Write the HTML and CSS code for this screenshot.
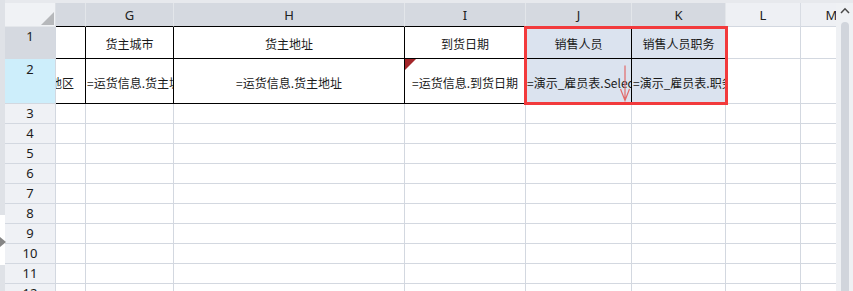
FILE: index.html
```html
<!DOCTYPE html>
<html lang="zh-CN">
<head>
<meta charset="utf-8">
<title>Sheet</title>
<link rel="stylesheet" href="styles.css">
</head>
<body>
<div class="app">
  <div class="lstrip">
    <div class="ls-top"></div>
    <div class="ls-gap"><span class="ls-arrow"></span></div>
    <div class="ls-bot"></div>
  </div>
  <div class="main">
    <div class="body">
      <div class="sheet">
        <div class="grid">
          <div class="corner"><span class="corner-tri"></span></div>
          <div class="ch tb"></div>
          <div class="ch tb">G</div>
          <div class="ch tb">H</div>
          <div class="ch tb">I</div>
          <div class="ch tb">J</div>
          <div class="ch tb">K</div>
          <div class="ch lt">L</div>
          <div class="ch lt">M</div>

          <div class="rh r1">1</div>
          <div class="c t"></div>
          <div class="c t">货主城市</div>
          <div class="c t">货主地址</div>
          <div class="c t">到货日期</div>
          <div class="c t hl">销售人员</div>
          <div class="c t hl">销售人员职务</div>
          <div class="c"></div>
          <div class="c"></div>

          <div class="rh r2">2</div>
          <div class="c t end">=运货信息.货主地区</div>
          <div class="c t start">=运货信息.货主城市</div>
          <div class="c t">=运货信息.货主地址</div>
          <div class="c t note"><span class="note-tri"></span>=运货信息.到货日期</div>
          <div class="c t hl start">=演示_雇员表.Select(姓名)<svg class="drag-arrow" width="12" height="37" viewBox="0 0 12 37"><path d="M6 0.5V35.5M1.5 24L6 35.5L10.5 24" fill="none" stroke="#e26a6a" stroke-width="1.2"/></svg></div>
          <div class="c t hl start">=演示_雇员表.职务</div>
          <div class="c"></div>
          <div class="c"></div>

          <div class="rh">3</div><div class="c"></div><div class="c"></div><div class="c"></div><div class="c"></div><div class="c"></div><div class="c"></div><div class="c"></div><div class="c"></div>
          <div class="rh">4</div><div class="c"></div><div class="c"></div><div class="c"></div><div class="c"></div><div class="c"></div><div class="c"></div><div class="c"></div><div class="c"></div>
          <div class="rh">5</div><div class="c"></div><div class="c"></div><div class="c"></div><div class="c"></div><div class="c"></div><div class="c"></div><div class="c"></div><div class="c"></div>
          <div class="rh">6</div><div class="c"></div><div class="c"></div><div class="c"></div><div class="c"></div><div class="c"></div><div class="c"></div><div class="c"></div><div class="c"></div>
          <div class="rh">7</div><div class="c"></div><div class="c"></div><div class="c"></div><div class="c"></div><div class="c"></div><div class="c"></div><div class="c"></div><div class="c"></div>
          <div class="rh">8</div><div class="c"></div><div class="c"></div><div class="c"></div><div class="c"></div><div class="c"></div><div class="c"></div><div class="c"></div><div class="c"></div>
          <div class="rh">9</div><div class="c"></div><div class="c"></div><div class="c"></div><div class="c"></div><div class="c"></div><div class="c"></div><div class="c"></div><div class="c"></div>
          <div class="rh">10</div><div class="c"></div><div class="c"></div><div class="c"></div><div class="c"></div><div class="c"></div><div class="c"></div><div class="c"></div><div class="c"></div>
          <div class="rh">11</div><div class="c"></div><div class="c"></div><div class="c"></div><div class="c"></div><div class="c"></div><div class="c"></div><div class="c"></div><div class="c"></div>
          <div class="rh">12</div><div class="c"></div><div class="c"></div><div class="c"></div><div class="c"></div><div class="c"></div><div class="c"></div><div class="c"></div><div class="c"></div>
        </div>
        <div class="selbox"></div>
      </div>
      <div class="vscroll">
        <svg class="up" width="10" height="7" viewBox="0 0 10 7"><path d="M1 6L5 1.8L9 6" fill="none" stroke="#4a4a4a" stroke-width="1.5"/></svg>
        <div class="thumb"></div>
      </div>
    </div>
  </div>
</div>
</body>
</html>
```
FILE: styles.css
```css
html, body {
  margin: 0;
  padding: 0;
  background: #ffffff;
}

body {
  font-family: "Noto Sans", "Noto Sans CJK SC", sans-serif;
}

.app {
  display: flex;
  width: 853px;
  height: 291px;
  overflow: hidden;
}

.lstrip {
  width: 5px;
  flex: none;
  display: flex;
  flex-direction: column;
}

.ls-top {
  height: 215px;
  background: #dfe2e7;
}

.ls-gap {
  height: 50px;
  box-sizing: border-box;
  padding-top: 22px;
  background: #ffffff;
}

.ls-arrow {
  position: relative;
  z-index: 3;
  display: block;
  width: 0;
  height: 0;
  border-left: 6px solid #858585;
  border-top: 5px solid transparent;
  border-bottom: 5px solid transparent;
}

.ls-bot {
  flex: 1;
  background: #dfe2e7;
}

.main {
  flex: 1;
  min-width: 0;
  display: flex;
  flex-direction: column;
  padding-top: 3px;
  background: #e7e9ed;
}

.body {
  flex: 1;
  min-height: 0;
  display: flex;
}

.sheet {
  position: relative;
  flex: 1;
  min-width: 0;
  overflow: hidden;
  background: #ffffff;
}

.grid {
  display: grid;
  grid-template-columns: 51px 30px 88px 231px 121px 106px 94px 75px 62px;
  grid-template-rows: 24px 32px 45px repeat(10, 20px);
}

.grid > div {
  box-sizing: border-box;
  min-width: 0;
}

.corner {
  position: relative;
  background: #f0f2f5;
  border-right: 1px solid #dde0e5;
  border-bottom: 1px solid #e4e7eb;
}

.corner-tri {
  position: absolute;
  right: 1px;
  bottom: 1px;
  width: 0;
  height: 0;
  border-left: 13px solid transparent;
  border-bottom: 13px solid #b6b8bb;
}

.ch {
  display: flex;
  align-items: center;
  justify-content: center;
  font-size: 13px;
  color: #222222;
  background: #d5d9e0;
  border-right: 1px solid #e3e6ea;
  border-bottom: 1px solid #d3d8e0;
}

.ch.tb {
  border-bottom-color: #000000;
}

.ch.lt {
  background: #eef0f4;
  border-right-color: #d8dce3;
}

.rh {
  display: flex;
  justify-content: center;
  align-items: flex-start;
  font-size: 13px;
  line-height: 19px;
  color: #1c1c1c;
  background: #eff1f5;
  border-right: 1px solid #d3d8e0;
  border-bottom: 1px solid #d3d8e0;
}

.rh.r1 {
  background: #d5d9e0;
  border-bottom-color: #d5d9e0;
}

.rh.r2 {
  padding-top: 1px;
  background: #cdeefb;
}

.c {
  position: relative;
  display: flex;
  align-items: center;
  justify-content: center;
  overflow: hidden;
  white-space: nowrap;
  font-family: "Noto Sans CJK SC", sans-serif;
  font-size: 12px;
  color: #1a1a1a;
  background: #ffffff;
  border-right: 1px solid #d3d8e0;
  border-bottom: 1px solid #d3d8e0;
}

.c.t {
  padding-top: 2px;
  border-right-color: #000000;
  border-bottom-color: #000000;
}

.c.hl {
  background: #dbe3ef;
}

.c.start {
  justify-content: flex-start;
  padding-left: 1px;
}

.c.end {
  justify-content: flex-end;
  padding-right: 11px;
}

.note-tri {
  position: absolute;
  top: 0;
  left: 0;
  width: 0;
  height: 0;
  border-top: 11px solid #a3262a;
  border-right: 11px solid transparent;
}

.drag-arrow {
  position: absolute;
  left: 93px;
  top: 6px;
}

.selbox {
  position: absolute;
  left: 519px;
  top: 23px;
  width: 204px;
  height: 79px;
  box-sizing: border-box;
  border: 3px solid #f23a3c;
  pointer-events: none;
}

.vscroll {
  width: 17px;
  flex: none;
  display: flex;
  flex-direction: column;
  align-items: center;
  background: #eff1f4;
}

.up {
  margin-top: 4px;
  flex: none;
}

.thumb {
  flex: 1;
  width: 8px;
  margin-top: 8px;
  border-radius: 4px 4px 0 0;
  background: #d1d5dc;
}
```
